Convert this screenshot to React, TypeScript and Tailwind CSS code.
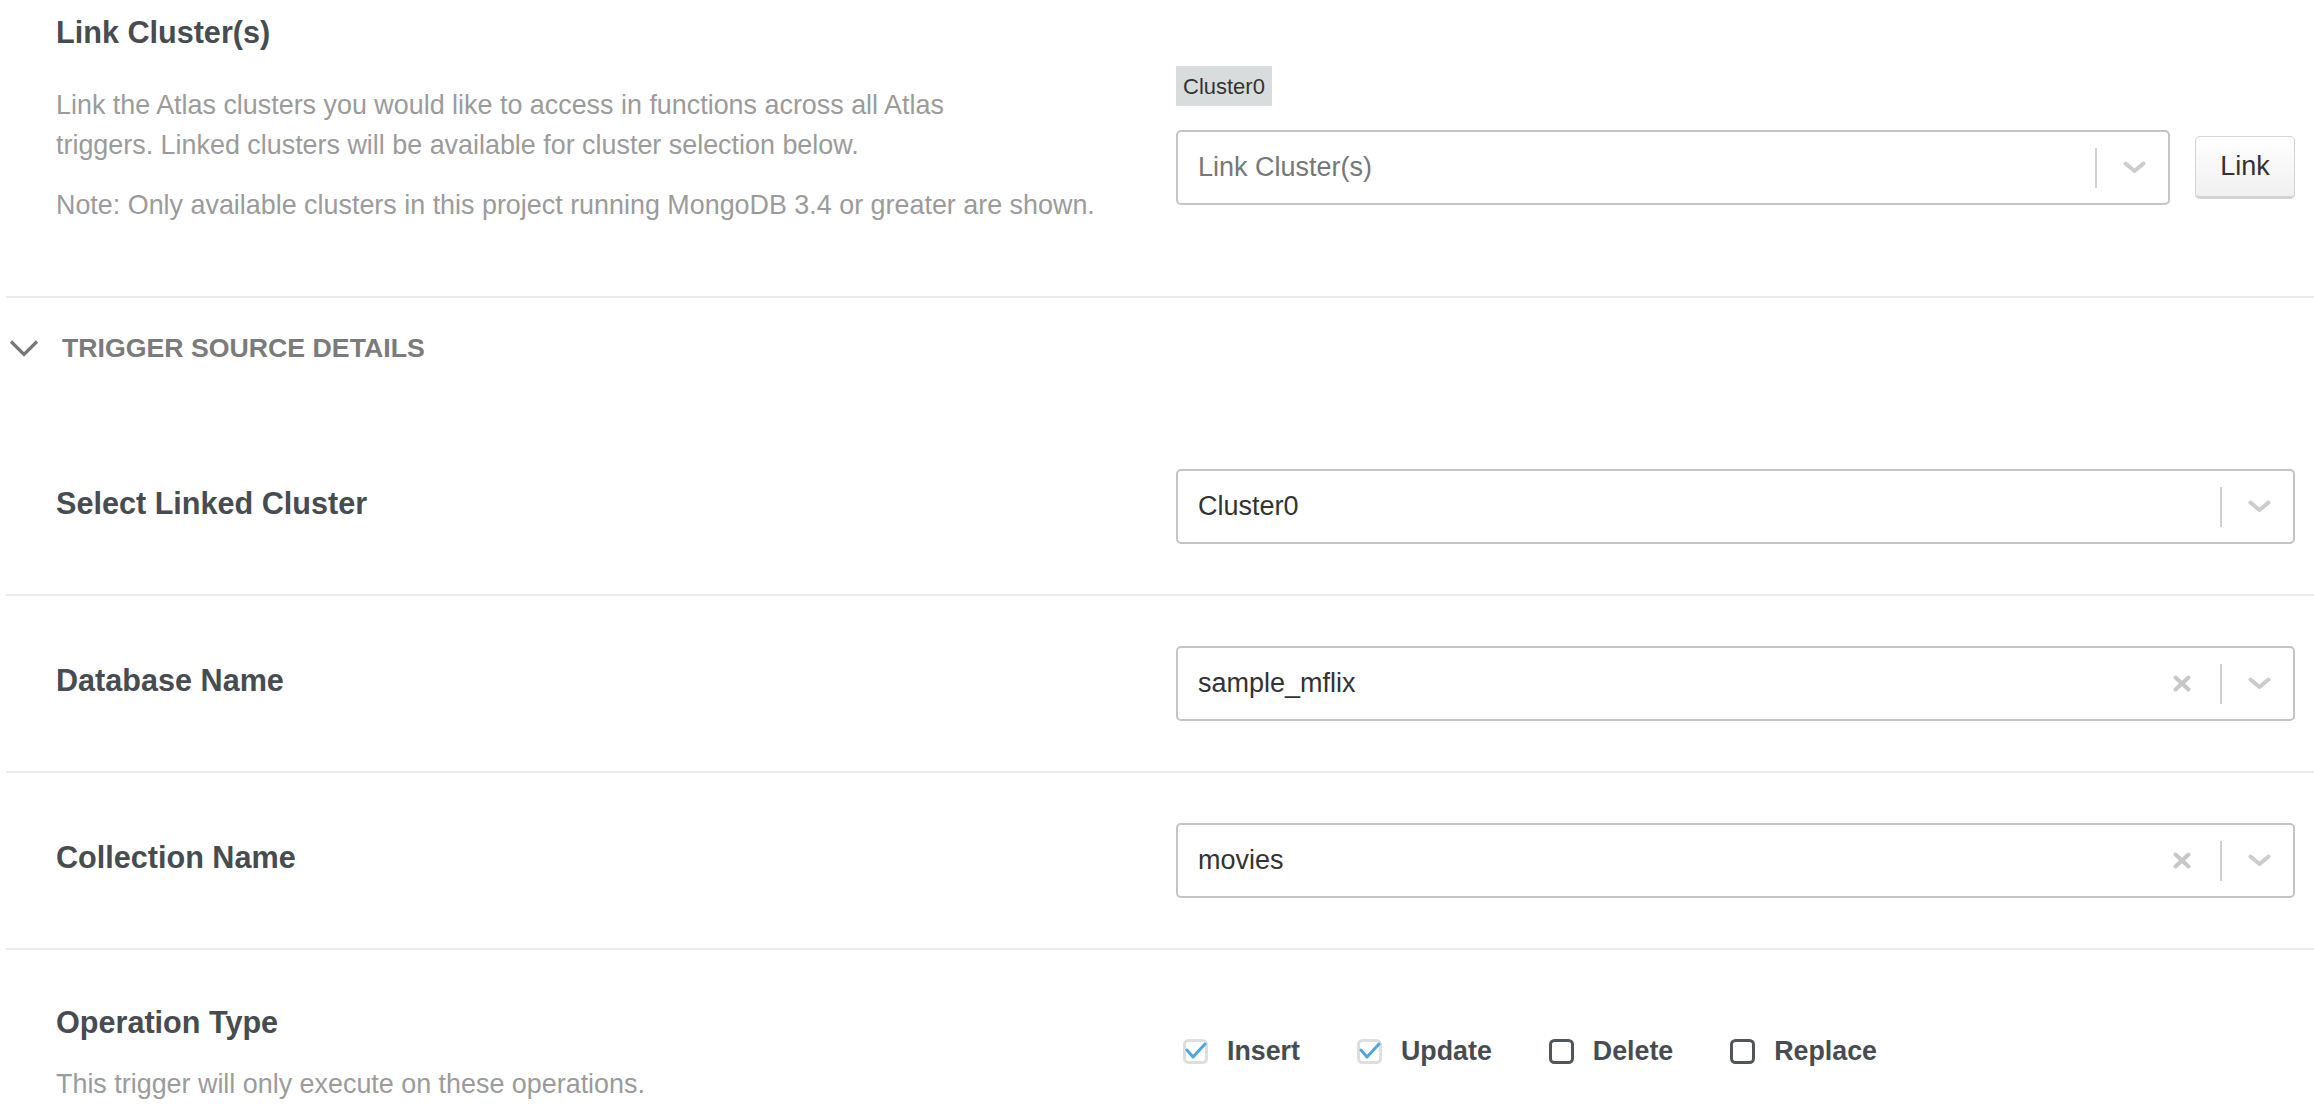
import React from 'react'

const labelCls = "text-[30.6px] leading-[36px] font-bold text-[#464c4f]"
const descCls = "text-[26.9px] leading-[40px] text-[#9b9b9b]"

function Chevron() {
  return (
    <svg width="23" height="13" viewBox="0 0 23 13" fill="none">
      <polyline points="2.5,2.5 11.5,10 20.5,2.5" stroke="#cccccc" strokeWidth="4" strokeLinecap="round" strokeLinejoin="round" />
    </svg>
  )
}

function ClearIcon() {
  return (
    <svg width="18" height="17" viewBox="0 0 18 17" fill="none">
      <path d="M2.5 2.5 L15.5 14.5 M15.5 2.5 L2.5 14.5" stroke="#c8c8c8" strokeWidth="4" strokeLinecap="round" />
    </svg>
  )
}

function SelectBox({ value, placeholder, clearable }: { value?: string; placeholder?: string; clearable?: boolean }) {
  return (
    <div className="flex h-[75px] w-full items-center rounded-[5px] border-2 border-[#c4c4c4] bg-white pl-[20px] pr-[22px]">
      <span className={"flex-1 text-[27px] " + (value ? "text-[#333]" : "text-[#777]")}>
        {value ?? placeholder}
      </span>
      {clearable && (
        <span className="mr-[29px] flex items-center">
          <ClearIcon />
        </span>
      )}
      <span className="h-[40px] w-[2px] bg-[#d0d0d0]" />
      <span className="ml-[26px] flex items-center">
        <Chevron />
      </span>
    </div>
  )
}

function Check({ checked, label }: { checked: boolean; label: string }) {
  return (
    <label className="flex items-center gap-[19px]">
      {checked ? (
        <svg width="25" height="25" viewBox="0 0 25 25" fill="none">
          <rect x="1.5" y="1.5" width="22" height="22" rx="4" stroke="#dedede" strokeWidth="3" />
          <polyline points="4,11 10,18 22,5" stroke="#4ea6e0" strokeWidth="3" strokeLinecap="round" strokeLinejoin="round" />
        </svg>
      ) : (
        <svg width="25" height="25" viewBox="0 0 25 25" fill="none">
          <rect x="1.5" y="1.5" width="22" height="22" rx="4" stroke="#50565a" strokeWidth="3" />
        </svg>
      )}
      <span className="text-[26.8px] font-bold text-[#464c4f]">{label}</span>
    </label>
  )
}

const rows = [
  { label: 'Select Linked Cluster', value: 'Cluster0', clearable: false },
  { label: 'Database Name', value: 'sample_mflix', clearable: true },
  { label: 'Collection Name', value: 'movies', clearable: true },
]

export default function App() {
  return (
    <div className="min-h-screen bg-white font-['Liberation_Sans',Arial,sans-serif]">
      <div className="ml-[6px]">
        <section className="grid grid-cols-[1120px_1fr] border-b-2 border-[#ebebeb] pb-[71px] pl-[50px] pr-[19px] pt-[14px]">
          <div>
            <h2 className={labelCls}>Link Cluster(s)</h2>
            <p className={"mt-[35px] " + descCls}>
              Link the Atlas clusters you would like to access in functions across all Atlas
              <br />
              triggers. Linked clusters will be available for cluster selection below.
            </p>
            <p className={"mt-[20px] " + descCls}>
              Note: Only available clusters in this project running MongoDB 3.4 or greater are shown.
            </p>
          </div>
          <div className="pt-[52px]">
            <span className="inline-flex h-[40px] items-center bg-[#d9dcdc] px-[7px] text-[22px] text-[#333]">Cluster0</span>
            <div className="mt-[24px] flex items-center gap-[25px]">
              <SelectBox placeholder="Link Cluster(s)" />
              <button className="h-[63px] w-[100px] shrink-0 rounded-[5px] border border-b-[3px] border-[#d3d3d3] bg-linear-to-b from-white to-[#f0f0f0] text-[27px] text-[#333]">
                Link
              </button>
            </div>
          </div>
        </section>

        <div className="flex items-center gap-[23px] pb-[57px] pl-[3px] pt-[36px]">
          <svg width="30" height="18" viewBox="0 0 30 18" fill="none">
            <polyline points="2,2.5 15,15.5 28,2.5" stroke="#777" strokeWidth="3.2" />
          </svg>
          <span className="text-[26.7px] leading-[28px] font-bold text-[#7b7b7b]">TRIGGER SOURCE DETAILS</span>
        </div>

        {rows.map((r) => (
          <section key={r.label} className="grid grid-cols-[1120px_1fr] items-center border-b-2 border-[#ebebeb] py-[50px] pl-[50px] pr-[19px]">
            <h3 className={labelCls + " mb-[8px]"}>{r.label}</h3>
            <SelectBox value={r.value} clearable={r.clearable} />
          </section>
        ))}

        <section className="grid grid-cols-[1120px_1fr] items-center pb-[20px] pl-[50px] pr-[19px] pt-[54px]">
          <div>
            <h3 className={labelCls}>Operation Type</h3>
            <p className={"mt-[24px] " + descCls}>This trigger will only execute on these operations.</p>
          </div>
          <div className="flex items-center gap-[57px] pb-[6px] pl-[7px]">
            <Check checked label="Insert" />
            <Check checked label="Update" />
            <Check checked={false} label="Delete" />
            <Check checked={false} label="Replace" />
          </div>
        </section>
      </div>
    </div>
  )
}
